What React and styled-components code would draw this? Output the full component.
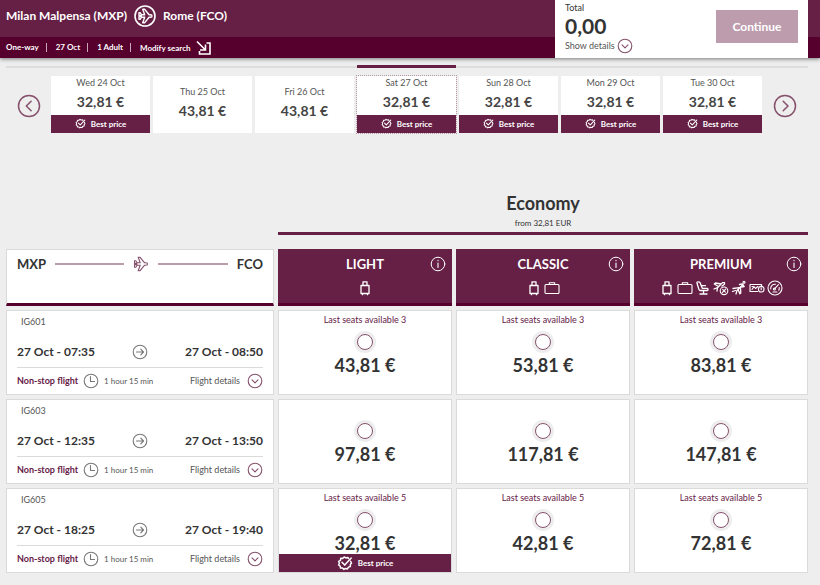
import React, { useState } from "react";
import styled, { createGlobalStyle, ThemeProvider } from "styled-components";

const theme = {
  colors: {
    primary: "#662046",
    dark: "#56002e",
    muted: "#bd9cae",
    text: "#333333",
    grey: "#555555",
    border: "#dadada",
    bg: "#eeeeee",
  },
};

const GlobalStyle = createGlobalStyle`
  * {
    box-sizing: border-box;
  }

  body {
    margin: 0;
    background-color: ${theme.colors.bg};
    color: ${theme.colors.text};
    font-family: "Lato", "Open Sans", sans-serif;
    font-size: 9px;
    line-height: 12px;
  }

  button {
    margin: 0;
    padding: 0;
    border: 0;
    background: none;
    color: inherit;
    font: inherit;
    cursor: pointer;
  }

  h1, h2, h3, p {
    margin: 0;
  }

  svg {
    display: block;
    flex: none;
  }
`;

const Header = styled.header`
  display: flex;
  padding-right: 12px;
  background: linear-gradient(
    ${({ theme }) => theme.colors.primary} 37px,
    ${({ theme }) => theme.colors.dark} 37px
  );
  box-shadow: 0 1px 4px rgba(0, 0, 0, 0.5);
`;

const Trip = styled.div`
  flex: 1;
  color: white;
`;

const Route = styled.h1`
  display: flex;
  align-items: center;
  gap: 7px;
  height: 37px;
  padding: 0 6px 6px;
  font-size: 12px;
  font-weight: 700;
`;

const Search = styled.div`
  display: flex;
  align-items: center;
  height: 21px;
  padding-left: 6px;
  font-size: 8px;
  font-weight: 700;

  span {
    padding-right: 7px;
    margin-right: 9px;
    border-right: 1px solid #c9a9b9;
    line-height: 9px;
  }
`;

const ModifyButton = styled.button`
  display: flex;
  align-items: center;
  gap: 5px;
`;

const Total = styled.section`
  display: flex;
  justify-content: space-between;
  flex: 0 0 253px;
  height: 58px;
  padding: 2px 10px;
  background-color: white;
`;

const Amount = styled.p`
  font-size: 21px;
  font-weight: 700;
  line-height: 24px;
`;

const DetailsButton = styled.button`
  display: flex;
  align-items: center;
  gap: ${({ $gap }) => $gap}px;
  color: ${({ theme }) => theme.colors.grey};
`;

const ContinueButton = styled.button`
  width: 82px;
  height: 33px;
  margin-top: 8px;
  background-color: ${({ theme }) => theme.colors.muted};
  color: white;
  font-size: 12px;
  font-weight: 700;
`;

const Main = styled.main`
  padding: 8px 12px 12px 6px;
`;

const Dates = styled.nav`
  display: grid;
  grid-template-columns: 45px 1fr 46px;
  border-top: 2px solid #dddddd;
`;

const DateList = styled.div`
  display: grid;
  grid-template-columns: repeat(7, 1fr);
  gap: 3px;
`;

const ArrowButton = styled.button`
  display: flex;
  justify-content: center;
  align-items: center;
  padding-top: 10px;
`;

const DateSlot = styled.div`
  margin-top: -3px;
  padding-top: 8px;
  border-top: 3px solid ${({ theme, $active }) => ($active ? theme.colors.primary : "transparent")};
`;

const DateButton = styled.button`
  display: flex;
  flex-direction: column;
  justify-content: center;
  width: 100%;
  height: 57px;
  background-color: white;
  color: ${({ theme }) => theme.colors.grey};
  outline: ${({ $active }) => ($active ? "1px dotted #b795a6" : "none")};

  > span {
    width: 100%;
    text-align: center;
  }

  > strong {
    width: 100%;
    height: 26px;
    color: #444444;
    font-size: 14px;
    line-height: 26px;
    text-align: center;
  }
`;

const BestPriceBar = styled.div`
  display: flex;
  justify-content: center;
  align-items: center;
  gap: 5px;
  width: 100%;
  height: 18px;
  background-color: ${({ theme }) => theme.colors.primary};
  color: white;
  font-size: 8px;
  font-weight: 700;
`;

const Fares = styled.section`
  display: grid;
  grid-template-columns: 268fr 174fr 174fr 174fr;
  gap: 4px;
  padding-top: 56px;
`;

const Cabin = styled.div`
  grid-column: 2 / -1;
  margin-bottom: 10px;
  padding-bottom: 3px;
  border-bottom: 3px solid ${({ theme }) => theme.colors.primary};
  text-align: center;

  h2 {
    font-size: 18px;
    line-height: 28px;
  }

  p {
    font-size: 8px;
  }
`;

const RouteHead = styled.div`
  height: 57px;
  padding: 0 10px;
  border: 1px solid ${({ theme }) => theme.colors.border};
  border-bottom: 3px solid ${({ theme }) => theme.colors.dark};
  background-color: white;
`;

const RouteLine = styled.div`
  display: flex;
  align-items: center;
  gap: 9px;
  height: 28px;
  font-size: 13px;
  font-weight: 700;

  i {
    flex: 1;
    height: 2px;
    background-color: ${({ theme }) => theme.colors.muted};
  }
`;

const FareHead = styled.div`
  height: 57px;
  border-bottom: 3px solid ${({ theme }) => theme.colors.dark};
  background-color: ${({ theme }) => theme.colors.primary};
  color: white;
`;

const FareTitle = styled.div`
  display: grid;
  grid-template-columns: 1fr auto 1fr;
  align-items: center;
  height: 30px;
  padding: 0 6px;

  h3 {
    grid-column: 2;
    font-size: 13px;
    line-height: 20px;
  }

  button {
    justify-self: end;
  }
`;

const Perks = styled.div`
  display: flex;
  justify-content: center;
  align-items: center;
  gap: 2px;
  height: 18px;
`;

const FlightCard = styled.article`
  height: 85px;
  padding: 0 10px;
  border: 1px solid ${({ theme }) => theme.colors.border};
  background-color: white;
`;

const FlightCode = styled.p`
  padding-left: 4px;
  color: ${({ theme }) => theme.colors.grey};
  line-height: 22px;
`;

const Times = styled.div`
  display: grid;
  grid-template-columns: 1fr auto 1fr;
  align-items: center;
  height: 35px;
  padding-top: 4px;
  border-bottom: 1px solid ${({ theme }) => theme.colors.border};
  font-size: 12px;
  font-weight: 700;

  time:last-child {
    text-align: right;
  }
`;

const FlightInfo = styled.div`
  display: flex;
  align-items: center;
  gap: 5px;
  height: 26px;
  color: ${({ theme }) => theme.colors.grey};

  strong {
    color: ${({ theme }) => theme.colors.primary};
  }

  span {
    font-size: 8px;
  }

  button {
    margin-left: auto;
  }
`;

const FareCell = styled.label`
  display: flex;
  flex-direction: column;
  align-items: center;
  height: 85px;
  border: 1px solid ${({ theme }) => theme.colors.border};
  background-color: white;
  cursor: pointer;
`;

const Seats = styled.span`
  height: 23px;
  padding-top: 3px;
  color: ${({ theme }) => theme.colors.primary};
`;

const Radio = styled.input`
  appearance: none;
  flex: none;
  width: 16px;
  height: 16px;
  margin: 0;
  border: 1px solid #85506b;
  border-radius: 50%;
  background-color: white;
  box-shadow: 0 0 0 3px #ededed;

  &:checked {
    background-color: ${({ theme }) => theme.colors.primary};
  }
`;

const Price = styled.strong`
  height: 26px;
  padding-top: 4px;
  font-size: 18px;
  line-height: 22px;
`;

function Icon({ size = 16, box = "0 0 16 16", color = "currentColor", children }) {
  return (
    <svg
      width={size}
      height={size}
      viewBox={box}
      fill="none"
      stroke={color}
      strokeWidth="1.1"
      strokeLinecap="round"
      strokeLinejoin="round"
      aria-hidden="true"
    >
      {children}
    </svg>
  );
}

const PLANE = "M1.5 4.8h1.3l1.4 2h3L5.2 1.3h1.9l4.5 5.5h1.3c2.2 0 2.2 2.4 0 2.4h-1.3l-4.5 5.5H5.2l2-5.5h-3l-1.4 2H1.5V8.6h2.3V7.4H1.5z";

const Plane = () => (
  <Icon color="#85506b">
    <path d={PLANE} />
  </Icon>
);

const CirclePlane = () => (
  <Icon size={22} box="0 0 22 22">
    <circle cx="11" cy="11" r="10" strokeWidth="1.6" />
    <g transform="translate(3.5 3)" strokeWidth="1.4">
      <path d={PLANE} />
    </g>
  </Icon>
);

const CircleChevron = () => (
  <Icon color="#85506b">
    <circle cx="8" cy="8" r="6.8" />
    <path d="M5 6.8l3 3 3-3" />
  </Icon>
);

const CircleArrow = () => (
  <Icon color="#777">
    <circle cx="8" cy="8" r="6.8" />
    <path d="M4.5 8h7M8.8 5.2L11.5 8l-2.7 2.8" />
  </Icon>
);

const Clock = () => (
  <Icon color="#777">
    <circle cx="8" cy="8" r="6.8" />
    <path d="M7.5 3.5v5h4" />
  </Icon>
);

const Info = () => (
  <Icon>
    <circle cx="8" cy="8" r="6.8" strokeWidth="1" />
    <path d="M8 7v4.5M8 4.2v.6" />
  </Icon>
);

const Modify = () => (
  <Icon>
    <path d="M1 1.5l8.5 8.5M9.5 4.5V10H4M10.5 3H14v11H3.5v-3" strokeWidth="1.6" strokeLinecap="butt" strokeLinejoin="miter" />
  </Icon>
);

const Badge = ({ size }) => (
  <Icon size={size}>
    <path d="M13.6 6.2l.9 2-1.2 1.3.1 2-2 .6-.9 1.8-2-.5-1.6 1-1.4-1.4-2 .1-.3-2L1.6 10l.8-1.8-.8-1.9 1.8-1 .3-2 2 .1L7.2 2l1.6.9 2-.4.7 1" strokeWidth="1.5" />
    <path d="M5 7.3l2.7 2.8 6.5-7" strokeWidth="1.5" />
  </Icon>
);

const perkIcons = {
  trolley: (
    <Icon>
      <path d="M6 5.5V1.8h4v3.7M4 5.5h8v8H4zM5.5 13.5v1.2M10.5 13.5v1.2" strokeWidth="1.3" />
    </Icon>
  ),
  suitcase: (
    <Icon>
      <rect x="1" y="4.5" width="14" height="9" rx="1" />
      <path d="M5.3 4.5V2.7h5.4v1.8" />
    </Icon>
  ),
  seat: (
    <Icon>
      <path d="M3 1.8c-1 0-1.2.7-1 1.5l1.9 6c.3.8.7 1.2 1.4 1.2h7c1 0 1-2.2 0-2.2H7.3L5 2.5c-.3-.6-1-.7-2-.7zM6 5.6h4.5M8.5 10.5v3M5 14h7" strokeWidth="1.3" />
    </Icon>
  ),
  refund: (
    <Icon>
      <path d="M1 9l3.5-1.3L9.5 2.6h2v1.6L9 6M8 4L2.5 3 1.3 4l4.2 2.5M4.5 7.7L4 11" strokeWidth="1.3" />
      <circle cx="11" cy="10.8" r="3.8" />
      <path d="M9.2 12.6l3.6-3.6M9.6 9.4l2.8 2.8" />
    </Icon>
  ),
  priority: (
    <Icon>
      <path d="M5 14l1-3.5L11.5 5M2 8.5l4.5-.7L9 7.5M1.5 11.5l3-1M9.5 8l.3 5-1 .8L7.3 10M8.5 4.5l3-.7 1.7 2.7-2.6.5" strokeWidth="1.3" />
      <circle cx="13" cy="2.3" r="1" />
    </Icon>
  ),
  ticket: (
    <Icon>
      <path d="M8.5 11.5H1v-7h11.5v2M3 9.5l2-3 1.5 2 2.3-2M3 6.5h1" />
      <circle cx="12.2" cy="9.2" r="2.8" />
      <path d="M12.2 7.8v2" />
    </Icon>
  ),
  lounge: (
    <Icon>
      <circle cx="8" cy="8" r="7" />
      <path d="M8 8.4l3.4-3.8M3.7 9c-.3-3 2-5 4.8-4.7M12.2 7.5c.2 1.2 0 2-.4 2.8M6 12h4" />
      <circle cx="7.4" cy="9" r="1" />
    </Icon>
  ),
};

const dates = [
  { day: "Wed 24 Oct", price: "32,81 €", best: true },
  { day: "Thu 25 Oct", price: "43,81 €" },
  { day: "Fri 26 Oct", price: "43,81 €" },
  { day: "Sat 27 Oct", price: "32,81 €", best: true },
  { day: "Sun 28 Oct", price: "32,81 €", best: true },
  { day: "Mon 29 Oct", price: "32,81 €", best: true },
  { day: "Tue 30 Oct", price: "32,81 €", best: true },
];

const fares = [
  { name: "LIGHT", perks: ["trolley"] },
  { name: "CLASSIC", perks: ["trolley", "suitcase"] },
  {
    name: "PREMIUM",
    perks: ["trolley", "suitcase", "seat", "refund", "priority", "ticket", "lounge"],
  },
];

const flights = [
  { code: "IG601", from: "07:35", to: "08:50", seats: 3, prices: ["43,81 €", "53,81 €", "83,81 €"] },
  { code: "IG603", from: "12:35", to: "13:50", prices: ["97,81 €", "117,81 €", "147,81 €"] },
  { code: "IG605", from: "18:25", to: "19:40", seats: 5, prices: ["32,81 €", "42,81 €", "72,81 €"], best: 0 },
];

function BestPrice({ size }) {
  return (
    <BestPriceBar>
      <Badge size={size} />
      Best price
    </BestPriceBar>
  );
}

function DateStrip() {
  const [active, setActive] = useState(3);

  return (
    <Dates aria-label="Departure date">
      <ArrowButton aria-label="Previous days">
        <Icon size={24} color="#85506b">
          <circle cx="8" cy="8" r="7" strokeWidth="1" />
          <path d="M9.4 4.8L6.2 8l3.2 3.2" strokeWidth="1" />
        </Icon>
      </ArrowButton>
      <DateList>
        {dates.map((date, i) => (
          <DateSlot key={date.day} $active={i === active}>
            <DateButton $active={i === active} onClick={() => setActive(i)}>
              <span>{date.day}</span>
              <strong>{date.price}</strong>
              {date.best && <BestPrice size={11} />}
            </DateButton>
          </DateSlot>
        ))}
      </DateList>
      <ArrowButton aria-label="Next days">
        <Icon size={24} color="#85506b">
          <circle cx="8" cy="8" r="7" strokeWidth="1" />
          <path d="M6.8 4.8L10 8l-3.2 3.2" strokeWidth="1" />
        </Icon>
      </ArrowButton>
    </Dates>
  );
}

function Flight({ flight }) {
  return (
    <>
      <FlightCard>
        <FlightCode>{flight.code}</FlightCode>
        <Times>
          <time>27 Oct - {flight.from}</time>
          <CircleArrow />
          <time>27 Oct - {flight.to}</time>
        </Times>
        <FlightInfo>
          <strong>Non-stop flight</strong>
          <Clock />
          <span>1 hour 15 min</span>
          <DetailsButton $gap={7}>
            Flight details
            <CircleChevron />
          </DetailsButton>
        </FlightInfo>
      </FlightCard>
      {flight.prices.map((price, i) => (
        <FareCell key={price}>
          <Seats>{flight.seats && `Last seats available ${flight.seats}`}</Seats>
          <Radio type="radio" name="fare" value={`${flight.code}-${fares[i].name}`} />
          <Price>{price}</Price>
          {flight.best === i && <BestPrice size={16} />}
        </FareCell>
      ))}
    </>
  );
}

function App() {
  return (
    <ThemeProvider theme={theme}>
      <GlobalStyle />
      <Header>
        <Trip>
          <Route>
            Milan Malpensa (MXP)
            <CirclePlane />
            Rome (FCO)
          </Route>
          <Search>
            <span>One-way</span>
            <span>27 Oct</span>
            <span>1 Adult</span>
            <ModifyButton>
              Modify search
              <Modify />
            </ModifyButton>
          </Search>
        </Trip>
        <Total>
          <div>
            <p>Total</p>
            <Amount>0,00</Amount>
            <DetailsButton $gap={2}>
              Show details
              <CircleChevron />
            </DetailsButton>
          </div>
          <ContinueButton>Continue</ContinueButton>
        </Total>
      </Header>
      <Main>
        <DateStrip />
        <Fares>
          <Cabin>
            <h2>Economy</h2>
            <p>from 32,81 EUR</p>
          </Cabin>
          <RouteHead>
            <RouteLine>
              MXP
              <i />
              <Plane />
              <i />
              FCO
            </RouteLine>
          </RouteHead>
          {fares.map((fare) => (
            <FareHead key={fare.name}>
              <FareTitle>
                <h3>{fare.name}</h3>
                <button aria-label={`About ${fare.name}`}>
                  <Info />
                </button>
              </FareTitle>
              <Perks>
                {fare.perks.map((perk) => (
                  <React.Fragment key={perk}>{perkIcons[perk]}</React.Fragment>
                ))}
              </Perks>
            </FareHead>
          ))}
          {flights.map((flight) => (
            <Flight key={flight.code} flight={flight} />
          ))}
        </Fares>
      </Main>
    </ThemeProvider>
  );
}

export default App;
